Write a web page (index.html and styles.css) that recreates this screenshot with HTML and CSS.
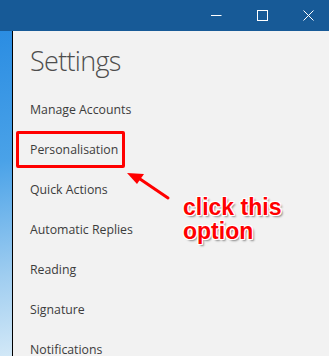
FILE: index.html
```html
<!DOCTYPE html>
<html>
<head>
<meta charset="utf-8">
<link rel="stylesheet" href="styles.css">
</head>
<body>
<div class="titlebar">
  <div class="ctrl"><svg width="11" height="11" viewBox="0 0 11 11"><path d="M0 5.5H10.5" stroke="#fff" stroke-width="1"/></svg></div>
  <div class="ctrl"><svg width="11" height="11" viewBox="0 0 11 11"><rect x="0.5" y="0.5" width="10" height="10" fill="none" stroke="#fff" stroke-width="1"/></svg></div>
  <div class="ctrl"><svg width="11" height="11" viewBox="0 0 11 11"><path d="M0.5 0.5L10.5 10.5M10.5 0.5L0.5 10.5" stroke="#fff" stroke-width="1"/></svg></div>
</div>
<div class="main">
  <div class="strip"></div>
  <div class="content">
    <h1 class="title">Settings</h1>
    <ul class="menu">
      <li>Manage Accounts</li>
      <li>Personalisation</li>
      <li>Quick Actions</li>
      <li>Automatic Replies</li>
      <li>Reading</li>
      <li>Signature</li>
      <li>Notifications</li>
    </ul>
  </div>
  <div class="highlight"></div>
  <svg class="arrow" width="60" height="40" viewBox="0 0 60 40">
    <path d="M48 31L20 12" stroke="#ff0000" stroke-width="3" stroke-linecap="round"/>
    <path d="M7 6L24 7L17 17Z" fill="#ff0000"/>
  </svg>
  <div class="note">click this<br>option</div>
</div>
</body>
</html>
```
FILE: styles.css
```css
html, body {
  margin: 0;
  padding: 0;
  width: 329px;
  height: 356px;
  overflow: hidden;
  background: #f2f2f2;
}
.titlebar {
  height: 31px;
  background: #175a97;
  display: flex;
  justify-content: flex-end;
  align-items: center;
  padding-right: 15px;
  gap: 35px;
}
.ctrl {
  width: 11px;
  height: 11px;
  display: flex;
}
.main {
  position: relative;
  display: flex;
  height: 325px;
}
.strip {
  width: 12px;
  flex: none;
  border-right: 1px solid #000;
  background: linear-gradient(170deg, #2b8de2 0%, #4aa2e8 40%, #9fcdf0 75%, #d2e8f7 100%);
}
.content {
  padding-left: 17px;
  font-family: "Segoe UI", "Open Sans", sans-serif;
}
.title {
  margin: 0;
  padding-top: 12px;
  height: 47px;
  font-weight: 300;
  font-size: 27px;
  line-height: 36px;
  color: #4d4d4d;
  letter-spacing: -0.7px;
}
.menu {
  list-style: none;
  margin: 0;
  padding: 0;
}
.menu li {
  height: 40px;
  line-height: 40px;
  font-size: 12.3px;
  color: #3c3c3c;
}
.highlight {
  position: absolute;
  left: 16px;
  top: 100px;
  width: 103px;
  height: 31px;
  border: 3px solid #ff0000;
  border-radius: 2px;
}
.arrow {
  position: absolute;
  left: 120px;
  top: 136px;
}
.note {
  position: absolute;
  left: 183px;
  top: 164px;
  font-family: "Liberation Sans", Arial, sans-serif;
  font-weight: bold;
  font-size: 23px;
  line-height: 24px;
  color: #ff0000;
  text-shadow:
    1px 0 0 #fff, -1px 0 0 #fff, 0 1px 0 #fff, 0 -1px 0 #fff,
    1px 1px 0 #fff, -1px -1px 0 #fff, 1px -1px 0 #fff, -1px 1px 0 #fff,
    2px 2px 2px #888;
}
```
